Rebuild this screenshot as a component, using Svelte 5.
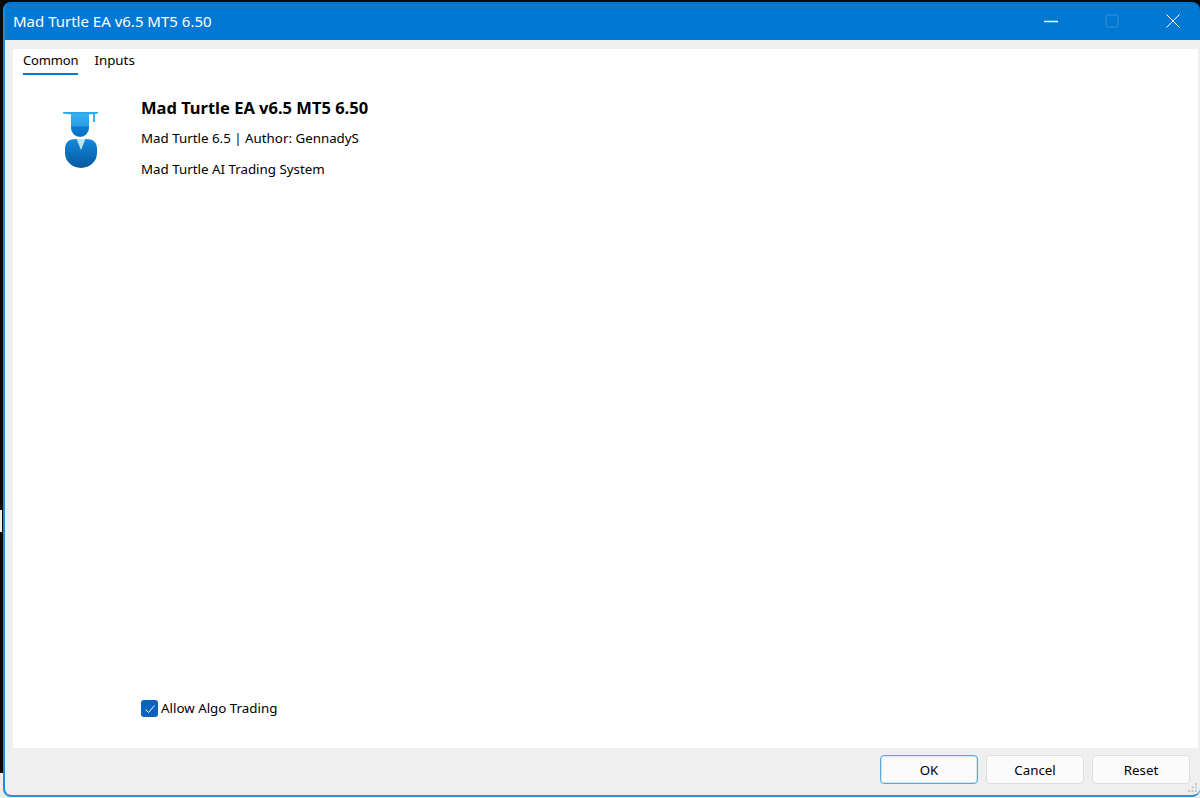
<script>
  const buttons = [
    { label: 'OK', primary: true },
    { label: 'Cancel', primary: false },
    { label: 'Reset', primary: false }
  ];
  const columns = ['Time', 'Type', 'Volume', 'Price', 'S / L', 'T / P', 'Price', 'Profit'];
</script>

<div class="screen">
  <div class="desk-mark"></div>
  <div class="table-head">
    {#each columns as c}
      <span>{c}</span>
    {/each}
  </div>
  <div class="window">
    <header class="titlebar">
      <span class="title">Mad Turtle EA v6.5 MT5 6.50</span>
      <div class="controls">
        <svg width="14" height="14" viewBox="0 0 14 14"><path d="M0 7.500h14" stroke="#fff" stroke-width="1.300"/></svg>
        <svg width="14" height="14" viewBox="0 0 14 14"><rect x="1" y="1" width="12" height="12" rx="1.500" fill="none" stroke="#3a93dd" stroke-width="1"/></svg>
        <svg width="14" height="14" viewBox="0 0 14 14"><path d="M0.500 0.500l13 13M13.500 0.500l-13 13" stroke="#fff" stroke-width="1"/></svg>
      </div>
    </header>
    <div class="body">
      <main class="panel">
        <nav class="tabs">
          <span class="tab active">Common</span>
          <span class="tab">Inputs</span>
        </nav>
        <section class="info">
          <svg class="logo" width="38" height="60" viewBox="0 0 38 60">
            <defs>
              <linearGradient id="head" x1="0" y1="0" x2="0" y2="1">
                <stop offset="0" stop-color="#36b1ee"/>
                <stop offset="0.5" stop-color="#2aa0e6"/>
                <stop offset="0.56" stop-color="#0d7ed4"/>
                <stop offset="1" stop-color="#0a6cc0"/>
              </linearGradient>
              <linearGradient id="torso" x1="0" y1="0" x2="0" y2="1">
                <stop offset="0" stop-color="#1588dc"/>
                <stop offset="1" stop-color="#04589f"/>
              </linearGradient>
            </defs>
            <path d="M2 1h35v1.500l-6 .7H8l-6-.7z" fill="#2aa8ea"/>
            <rect x="32" y="3" width="2" height="8" fill="#39b4ee"/>
            <path d="M10 3h18v14a9 9 0 0 1-18 0z" fill="url(#head)"/>
            <path d="M15 28C8 28 4 31 4 38v4a16 15 0 0 0 32 0v-4c0-7-4-10-11-10z" fill="url(#torso)"/>
            <path d="M15.500 28h9L20 39z" fill="#b5e6f9"/>
          </svg>
          <div class="text">
            <h1>Mad Turtle EA v6.5 MT5 6.50</h1>
            <p>Mad Turtle 6.5 | Author: GennadyS</p>
            <p>Mad Turtle AI Trading System</p>
          </div>
        </section>
        <label class="check">
          <span class="box">
            <svg width="12" height="12" viewBox="0 0 12 12"><path d="M1.500 6.500l3 3 6-7" fill="none" stroke="#fff" stroke-width="1"/></svg>
          </span>
          <span>Allow Algo Trading</span>
        </label>
      </main>
      <footer class="footer">
        {#each buttons as b}
          <button class:primary={b.primary}>{b.label}</button>
        {/each}
        <svg class="grip" width="10" height="10" viewBox="0 0 10 10">
          <path d="M7 0h2v2H7zM3.500 3.500h2v2h-2zM7 3.500h2v2H7zM0 7h2v2H0zM3.500 7h2v2h-2zM7 7h2v2H7z" fill="#c6c6c6"/>
        </svg>
      </footer>
    </div>
  </div>
</div>

<style>
  :global(body) {
    margin: 0;
    background: #000;
  }
  .screen {
    position: relative;
    width: 1200px;
    height: 798px;
    overflow: hidden;
    background: #0a0a0a;
    font-family: "Noto Sans", "Open Sans", sans-serif;
    color: #000;
  }
  .desk-mark {
    position: absolute;
    left: 0;
    top: 510px;
    width: 2px;
    height: 22px;
    background: #e8f0e8;
  }
  .table-head {
    position: absolute;
    left: 0;
    right: 0;
    top: 773px;
    height: 25px;
    box-sizing: border-box;
    padding: 21px 0 0 16px;
    display: grid;
    grid-template-columns: 144px 125px 160px 145px 145px 140px 155px 1fr;
    background: #ececec;
    font-size: 13px;
    line-height: 18px;
    color: #222;
  }
  .window {
    position: absolute;
    left: 3px;
    top: 2px;
    width: 1197px;
    height: 795px;
    box-sizing: border-box;
    display: flex;
    flex-direction: column;
    background: #0078d4;
    border-radius: 8px;
    border-bottom: 2px solid #2f8fd6;
    border-left: 2px solid #1c8be0;
    overflow: hidden;
  }
  .titlebar {
    height: 38px;
    flex: none;
    display: flex;
    align-items: center;
    justify-content: space-between;
    color: #fff;
    font-size: 15px;
    padding-left: 8px;
  }
  .controls {
    display: flex;
    align-items: center;
    gap: 47px;
    padding-right: 20px;
  }
  .body {
    flex: 1;
    display: flex;
    flex-direction: column;
    background: #efefef;
    padding: 9px 2px 0 8px;
    min-height: 0;
  }
  .panel {
    flex: 1;
    background: #fff;
    display: flex;
    flex-direction: column;
    min-height: 0;
  }
  .tabs {
    display: flex;
    gap: 16px;
    padding: 2px 0 0 10px;
    font-size: 13.330px;
    line-height: 19px;
  }
  .tab {
    padding-bottom: 3px;
    border-bottom: 2px solid transparent;
  }
  .tab.active {
    font-size: 13px;
    letter-spacing: -0.150px;
    border-bottom-color: #0078d4;
  }
  .info {
    display: flex;
    flex: 1;
    padding: 36px 0 0 48px;
  }
  .logo {
    margin-right: 42px;
    flex: none;
  }
  .text {
    margin-top: -14px;
  }
  h1 {
    margin: 0 0 10px;
    font-size: 16.500px;
    line-height: 22px;
    font-weight: 700;
    color: #000;
  }
  p {
    margin: 0 0 12px;
    font-size: 13.330px;
    line-height: 19px;
  }
  .check {
    display: flex;
    align-items: center;
    gap: 3px;
    margin: 0 0 30px 128px;
    font-size: 13.330px;
    line-height: 19px;
  }
  .box {
    width: 17px;
    height: 17px;
    border-radius: 3px;
    background: #0b63bd;
    display: flex;
    align-items: center;
    justify-content: center;
  }
  .footer {
    position: relative;
    height: 47px;
    flex: none;
    display: flex;
    justify-content: flex-end;
    align-items: flex-start;
    gap: 8px;
    padding: 7px 8px 0 0;
    box-sizing: border-box;
  }
  button {
    width: 98px;
    height: 29px;
    box-sizing: border-box;
    background: #fbfbfb;
    border: 1px solid #dedede;
    border-radius: 4px;
    font: inherit;
    font-size: 13.330px;
    color: #000;
    padding: 0;
  }
  button.primary {
    border-color: #5ba8e0;
    box-shadow: inset 0 0 0 0.5px #a8d0ee;
  }
  .grip {
    position: absolute;
    right: 0;
    bottom: 2px;
  }
</style>
